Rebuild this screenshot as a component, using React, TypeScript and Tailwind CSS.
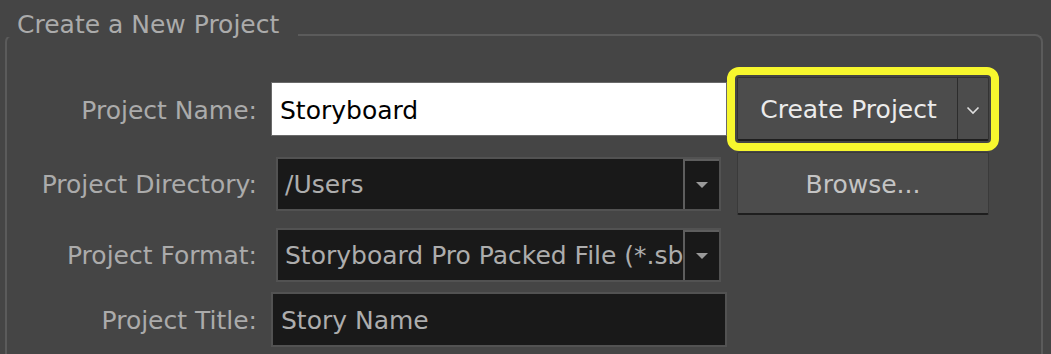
import React from "react";

const font = { fontFamily: '"DejaVu Sans", "Liberation Sans", sans-serif' };

function Label({ children }: { children: React.ReactNode }) {
  return (
    <div className="w-[250px] shrink-0 pt-[3px] text-right text-[25px] leading-[28px] text-[#ababab] whitespace-nowrap">
      {children}
    </div>
  );
}

function Triangle() {
  return (
    <svg width="14" height="8" viewBox="0 0 14 8">
      <polygon points="1,1 13,1 7,7" fill="#9a9a9a" />
    </svg>
  );
}

function Combo({ value }: { value: string }) {
  return (
    <div className="ml-[19px] flex h-[54px] w-[445px] border-2 border-[#525252] bg-[#191919]">
      <div className="flex min-w-0 flex-1 items-center overflow-hidden whitespace-nowrap pl-[7px] pt-[3px] text-[25px] leading-[28px] text-[#adadad]">
        {value}
      </div>
      <div className="flex w-[36px] items-center justify-center border-l-2 border-t-2 border-[#5e5e5e] bg-[#191919]">
        <Triangle />
      </div>
    </div>
  );
}

export default function App() {
  return (
    <div
      className="relative h-[354px] w-[1051px] overflow-hidden bg-[#454545]"
      style={font}
    >
      <div className="absolute left-0 top-0 z-10 h-[37px] w-[298px] bg-[#454545] pl-[17px] pt-[11px] text-[25px] leading-[28px] text-[#ababab] whitespace-nowrap">
        Create a New Project
      </div>
      <div className="ml-[5px] mt-[34px] h-[400px] w-[1038px] rounded-t-[8px] border-l-2 border-r-2 border-t-2 border-[#5b5b5b] pt-[41px]">
        {/* Row 1 */}
        <div className="flex h-[64px] items-center">
          <Label>Project Name:</Label>
          <div className="ml-[14px] flex h-[54px] w-[456px] items-center border border-[#6a6a6a] bg-white pl-[8px] pt-[3px] text-[25px] leading-[28px] text-black">
            Storyboard
          </div>
          <div className="ml-[10px] flex h-[64px] w-[252px] rounded-[2px] border border-[#333333] border-b-2 border-b-[#1e1e1e] bg-[#4c4c4c] outline outline-[8px] outline-offset-[2px] outline-[#f7f72e]">
            <div className="flex flex-1 items-center justify-center pl-[2px] pt-[3px] text-[25px] leading-[28px] text-[#ebebeb]">
              Create Project
            </div>
            <div className="flex w-[31px] items-center justify-center border-l border-[#2c2c2c] pt-[3px]">
              <svg width="14" height="9" viewBox="0 0 14 9">
                <polyline
                  points="1.5,1.5 7,7 12.5,1.5"
                  fill="none"
                  stroke="#dedede"
                  strokeWidth="1.6"
                />
              </svg>
            </div>
          </div>
        </div>
        {/* Row 2 */}
        <div className="mt-[11px] flex h-[63px] items-center">
          <Label>Project Directory:</Label>
          <Combo value="/Users" />
          <div className="ml-[16px] flex h-[63px] w-[252px] items-center justify-center rounded-[2px] border border-[#3a3a3a] border-b-2 border-b-[#1e1e1e] bg-[#4c4c4c] pt-[3px] text-[25px] leading-[28px] text-[#c4c4c4]">
            Browse...
          </div>
        </div>
        {/* Row 3 */}
        <div className="mt-[12px] flex h-[55px] items-center">
          <Label>Project Format:</Label>
          <Combo value="Storyboard Pro Packed File (*.sb" />
        </div>
        {/* Row 4 */}
        <div className="mt-[10px] flex h-[55px] items-center">
          <Label>Project Title:</Label>
          <div className="ml-[14px] flex h-[55px] w-[456px] items-center border-2 border-[#525252] bg-[#191919] pl-[8px] pt-[3px] text-[25px] leading-[28px] text-[#adadad]">
            Story Name
          </div>
        </div>
      </div>
    </div>
  );
}
